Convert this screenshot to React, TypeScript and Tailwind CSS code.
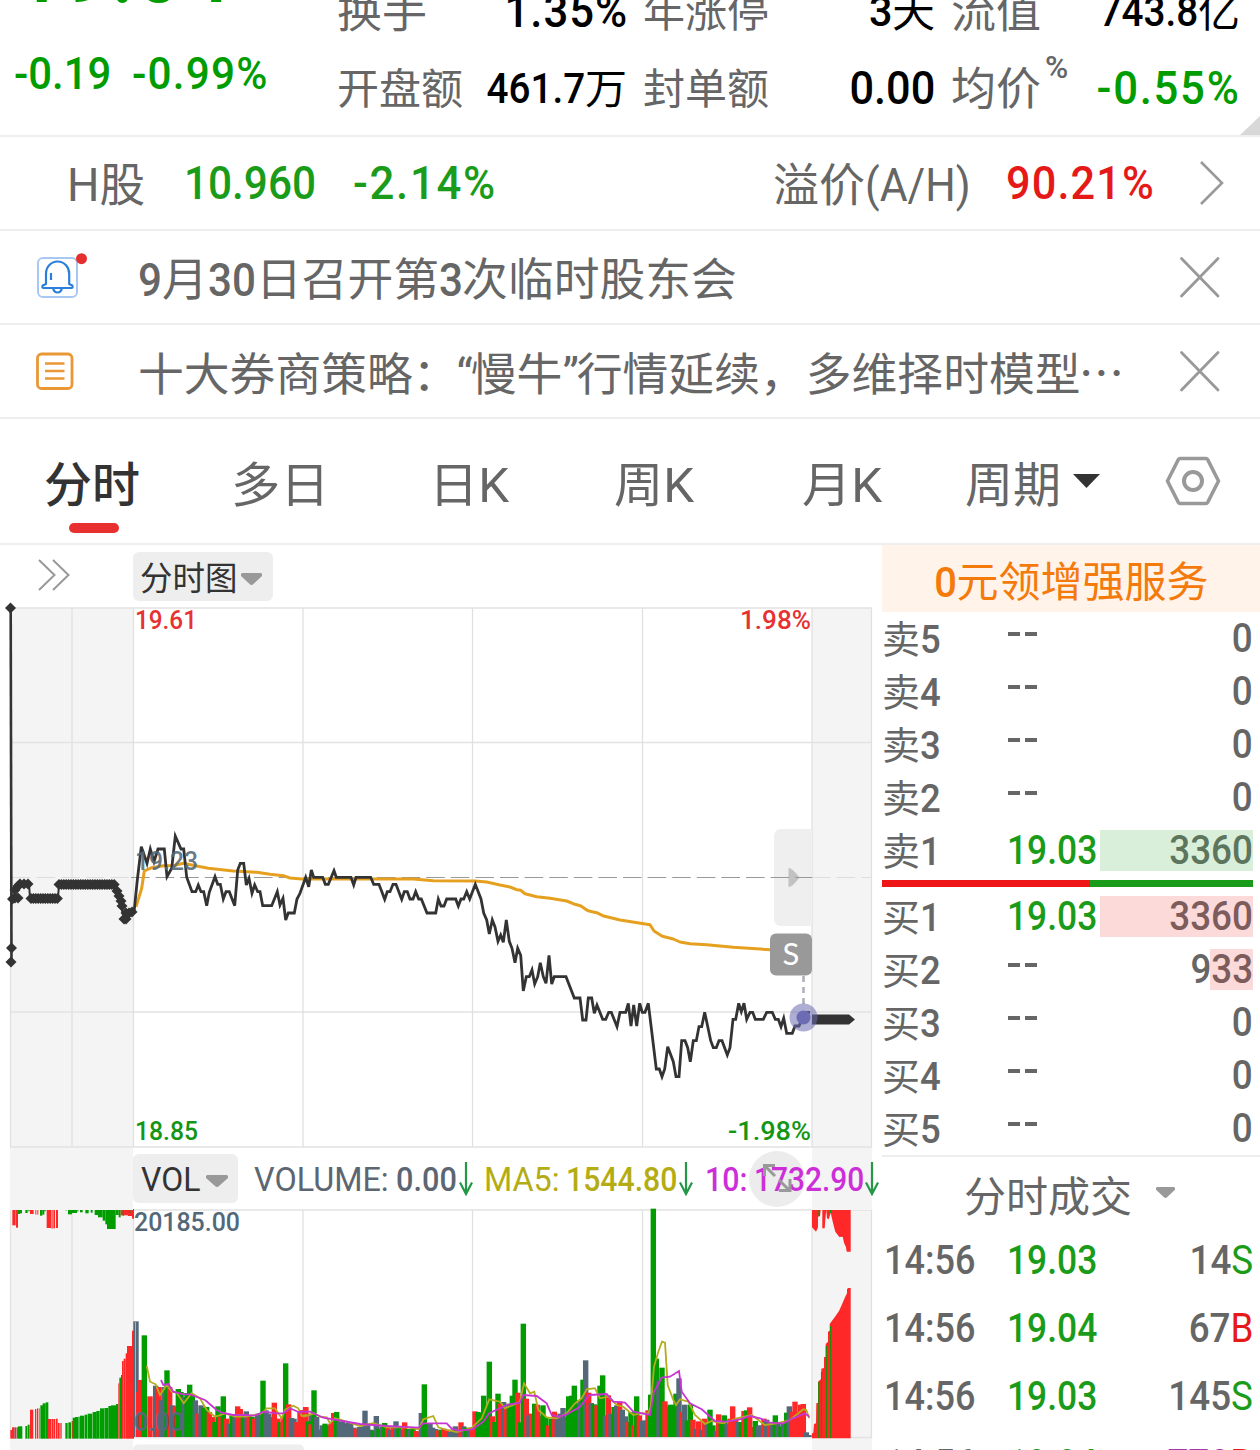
import type { ReactNode } from 'react';
import clsx from 'clsx';

const GREEN = '#009c00';
const RED = '#ff2828';
const SLATE = '#536878';

// condensed digits
const Num = ({ children, className }: { children: ReactNode; className?: string }) => (
  <span className={clsx('inline-block whitespace-nowrap', className ?? 'origin-left scale-x-[.92]')}>{children}</span>
);

const Caret = ({ className }: { className: string }) => (
  <svg viewBox="0 0 22 12" preserveAspectRatio="none" className={className} fill="currentColor">
    <path d="M1 0h20l1 1v2l-9 8q-2 2-4 0l-9-8v-2z" />
  </svg>
);

const CloseIcon = () => (
  <svg width="42" height="42" viewBox="0 0 42 42" className="shrink-0" stroke="#999" strokeWidth="2.8" strokeLinecap="round">
    <path d="M2.500 2.500l36.500 37.500M39 2.500l-36.500 37.500" />
  </svg>
);

const DownArrow = () => (
  <svg width="14" height="34" viewBox="0 0 14 34" className="shrink-0" fill="none" stroke="#249846" strokeWidth="2.2">
    <path d="M7 0v32M1 20.5l6 11.5 6-11.5" />
  </svg>
);

const stats = [
  {
    width: 'w-[306px] pr-[16px]',
    rows: [
      { label: '换手', size: 'text-[45px]', value: '1.35%', unit: '', num: 'text-[46px]', fit: 'origin-right scale-x-[.95] tracking-[1px] -mr-[1px]' },
      { label: '开盘额', size: 'text-[42px]', value: '461.7', unit: '万', num: 'text-[42px]', fit: 'origin-right scale-x-[.92]' },
    ],
  },
  {
    width: 'w-[308px] pr-[16px]',
    rows: [
      { label: '年涨停', size: 'text-[42px]', value: '3', unit: '天', num: 'text-[43px]', fit: 'origin-right scale-x-[.96]' },
      { label: '封单额', size: 'text-[42px]', value: '0.00', unit: '', num: 'text-[46px]', fit: 'origin-right scale-x-[.94]' },
    ],
  },
  {
    width: 'w-[309px] pr-[20px]',
    rows: [
      { label: '流值', size: 'text-[45px]', value: '743.8', unit: '亿', num: 'text-[42px]', fit: 'origin-right scale-x-[.92]' },
      {
        label: '均价',
        size: 'text-[45px]',
        value: '-0.55%',
        unit: '',
        num: 'text-[46px]',
        fit: 'origin-right scale-x-[.95] tracking-[1.8px] -mr-[1px]',
        sup: '%',
        green: true,
      },
    ],
  },
];

const Header = () => (
  <div className="relative flex h-[137px] overflow-hidden border-b-2 border-[#eee]">
    <div className="w-[337px] shrink-0 font-medium text-[#009c00]">
      <div className="-mt-[75px] h-[89px] pl-[15px] text-[95px] leading-[90px]">
        <Num className="origin-left scale-x-[.89]">19.04</Num>
      </div>
      <div className="flex h-[118px] items-center pl-[14px] text-[45px]">
        <Num className="w-[118px] origin-left scale-x-[.93]">-0.19</Num>
        <Num className="origin-left scale-x-[.94] tracking-[1.3px]">-0.99%</Num>
      </div>
    </div>
    {stats.map((col, i) => (
      <div key={i} className={clsx('-mt-[28px] shrink-0', col.width)}>
        {col.rows.map((row) => (
          <div key={row.label} className="flex h-[77px] items-center justify-between leading-[77px] whitespace-nowrap">
            <span className={clsx('relative pt-1 text-[#666]', row.size)}>
              {row.label}
              {row.sup && <span className="absolute -top-[18px] left-[94px] text-[31px] font-medium scale-x-[1.02] origin-left">{row.sup}</span>}
            </span>
            <span className={clsx('flex items-center pt-[1px] font-medium', row.num, row.green ? 'text-[#009c00]' : 'text-black')}>
              <Num className={row.fit}>{row.value}</Num>
              {row.unit && <span className="pt-[2px] font-normal">{row.unit}</span>}
            </span>
          </div>
        ))}
      </div>
    ))}
    <svg className="absolute right-0 bottom-0" width="20" height="19">
      <path d="M0 19L20 0v19z" fill="#d8d8d8" />
    </svg>
  </div>
);

const HShareRow = () => (
  <div className="flex h-[94px] items-center border-b-2 border-[#eee] text-[46px] text-[#666]">
    <div className="w-[184px] pt-[4px] pl-[67px]">
      <Num className="origin-left scale-x-[.99]">H股</Num>
    </div>
    <div className="w-[169px] font-medium text-[#1a9c1a]">
      <Num>10.960</Num>
    </div>
    <div className="w-[420px] font-medium text-[#1a9c1a]">
      <Num className="origin-left scale-x-[.95] tracking-[1.8px]">-2.14%</Num>
    </div>
    <div className="w-[233px] pt-[4px] whitespace-nowrap">
      溢价<Num className="origin-left scale-x-[.93]">(A/H)</Num>
    </div>
    <div className="w-[193px] font-medium text-[#e61919]">
      <Num className="origin-left scale-x-[.94] tracking-[1.2px]">90.21%</Num>
    </div>
    <svg width="26" height="46" viewBox="0 0 26 46" fill="none" stroke="#999" strokeWidth="2.6">
      <path d="M2 2l21 21L2 44" />
    </svg>
  </div>
);

const Notices = () => (
  <div className="text-[45.800px] text-[#666]">
    <div className="flex h-[94px] items-center border-b-2 border-[#eee] pr-[39px]">
      <svg width="138" height="50" viewBox="0 252 138 50" className="shrink-0" fill="none">
        <rect x="38" y="258" width="39" height="39" rx="5" stroke="#a8c8f4" strokeWidth="2" />
        <path
          d="M46 284V273.500A11.600 12 0 0 1 69.200 273.500V284L72.300 285.500Q73.300 288 71.300 288H43.700Q41.700 288 42.700 285.500Z"
          stroke="#2b7fdb"
          strokeWidth="2.2"
          strokeLinejoin="round"
        />
        <path d="M53 288q1 4.500 4.500 4.500t4.500-4.500M51 273v7" stroke="#2b7fdb" strokeWidth="2.2" />
        <circle cx="81.500" cy="258.700" r="5.500" fill="#e52e2e" />
      </svg>
      <span className="flex-1 pt-[8px] whitespace-nowrap">
        <Num className="origin-left scale-x-[.92] font-medium">9</Num>
        <span className="-ml-[2px]">月</span>
        <Num className="origin-left scale-x-[.92] font-medium">30</Num>
        <span className="-ml-[4px]">日召开第</span>
        <Num className="origin-left scale-x-[.92] font-medium">3</Num>
        <span className="-ml-[3px]">次临时股东会</span>
      </span>
      <CloseIcon />
    </div>
    <div className="flex h-[94px] items-center border-b-2 border-[#eee] pr-[39px]">
      <svg width="138" height="50" viewBox="0 346 138 50" className="shrink-0" fill="none" stroke="#ea9836">
        <rect x="37.500" y="354" width="34.500" height="34.500" rx="4" strokeWidth="2.8" />
        <path d="M45 363.500h19.500M45 371h19.500M45 378.500h19.500" strokeWidth="2.6" />
      </svg>
      <span className="flex-1 pt-[5px] whitespace-nowrap">
        十大券商策略：
        <span className="-ml-[2px] tracking-[-2px]">“</span>慢牛<span className="tracking-[-2px]">”</span>
        行情延续，多维择时模型
        <span className="-ml-[2px] font-['Noto_Sans_CJK_SC',sans-serif] leading-none">…</span>
      </span>
      <CloseIcon />
    </div>
  </div>
);

const tabs = [
  { name: '多日', width: 'w-[198px]' },
  { name: '日K', width: 'w-[185px]' },
  { name: '周K', width: 'w-[188px]' },
  { name: '月K', width: 'w-[163px]' },
];

const Tabs = () => (
  <div className="flex h-[126px] items-center border-b-2 border-[#eee] text-[48px] text-[#666]">
    <div className="relative w-[187px] pt-[9px] pl-[44px] font-medium text-[#333]">
      分时
      <span className="absolute -bottom-[23px] left-[69px] h-[10px] w-[50px] rounded-full bg-[#e83030]" />
    </div>
    <div className="flex pt-[9px] pl-[44px]">
      {tabs.map((tab) => (
        <div key={tab.name} className={tab.width}>
          <Num className="origin-left scale-x-[1.025]">{tab.name}</Num>
        </div>
      ))}
    </div>
    <div className="flex items-center pt-[9px]">
      周期
      <svg width="28" height="14" className="ml-[12px] -mt-[9px]">
        <path d="M0 0h27L13.500 14z" fill="#333" />
      </svg>
    </div>
    <svg width="58" height="52" viewBox="0 0 58 52" className="ml-[63px]" fill="none" stroke="#999">
      <path d="M16 3.500h26q1 0 1.700 1.200L54.500 26 43.700 47.300q-.7 1.200-1.700 1.200H16q-1 0-1.700-1.200L3.500 26 14.300 4.700Q15 3.500 16 3.500z" strokeWidth="3.5" />
      <circle cx="29" cy="26" r="9" strokeWidth="4" />
    </svg>
  </div>
);

// series are stored at three units per pixel, relative to an origin
const toPoints = (raw: string, ox: number, oy: number) =>
  raw
    .trim()
    .split(/\s+/)
    .map((p) => {
      const [x, y] = p.split(',').map(Number);
      return `${(ox + x / 3).toFixed(1)},${(oy + y / 3).toFixed(1)}`;
    })
    .join(' ');

const priceLine = [
  toPoints(
    '402,1103 412,1005 424,905 441,955 451,912 462,950 474,912 493,912 501,995 515,970 526,873 543,912 551,912 560,997 576,1040 587,1040 595,1020 603,1040 611,1040 620,1082 628,1042 645,995 653,1018 661,1018 670,1062 678,1040 688,1040 704,1082 713,975 721,955 731,955 739,1020 747,1000 756,1045 764,1020 773,1040 780,1040 788,1082 815,1082 832,1040 840,1080 849,1060 857,1125 865,1104 883,1104 891,1062',
    0,
    545,
  ),
  toPoints(
    '0,220 17,172 26,200 34,150 41,172 68,172 76,193 85,193 102,152 109,172 153,172 161,195 168,172 212,172 221,193 237,193 254,238 262,215 270,215 279,193 288,193 305,238 313,215 322,215 330,237 339,237 347,215 356,237 364,237 381,279 407,279 415,237 423,258 432,258 440,237 467,237 475,258 483,237 491,237 500,215 509,237 526,193 543,237 551,279 560,300 568,342 577,300 585,321 594,364 602,345 610,367 619,300 628,364 636,385 645,428 653,385 662,406 670,513 679,470 688,470 696,450 704,492 713,470 721,428 730,470 738,490 747,406 755,492 763,470 798,470 823,534 840,534 848,600 858,600 865,534',
    300,
    820,
  ),
  toPoints(
    '5,534 13,580 21,555 38,598 47,598 56,577 64,577 81,620 90,577 107,577 115,550 123,618 131,555 140,618 149,550 157,577 165,577 175,550 199,747 208,747 216,770 224,747 233,680 250,725 258,770 267,770 275,662 285,662 293,683 301,725 310,662 319,662 327,620 335,620 344,577 362,662 370,683 379,683 387,662 396,662 412,705 420,683 429,598 437,598 446,550 454,575 462,550 470,598 480,577 488,577 496,598 520,598 530,577 547,577 556,598 565,598 573,620 581,595 590,640 607,640 615,618 627,618 645,577 660,577',
    590,
    820,
  ),
].join(' ');

const averageLine = [
  toPoints('408,1085 425,1030 433,978 455,968 490,962 520,962 550,955 590,963 625,970 700,978 770,982 810,988 850,992 870,999 905,1002', 0, 545),
  toPoints('25,177 340,177 400,182 525,183 560,186 600,195 630,201 650,209 662,211 675,221 710,230 750,235 800,243 825,253 843,258 860,270', 300, 820),
  toPoints('0,274 20,278 38,287 90,300 180,314 192,333 217,349 250,357 270,366 300,371 350,374 430,382 540,389', 590, 820),
].join(' ');

const auction: [number, number][] = [
  [10.5, 608], [11.5, 948], [11, 962],
  [12.5, 899], [15, 898], [18, 898], [15, 890], [18, 886], [20, 884], [24, 884], [28, 884],
  ...Array.from({ length: 12 }, (_, i): [number, number] => [31 + i * 2.4, 898.5]),
  ...Array.from({ length: 24 }, (_, i): [number, number] => [59 + i * 2.4, 884.5]),
  [117, 891], [119, 896], [121, 901], [122, 906], [124, 919], [126, 919], [126, 913], [129, 913], [132, 912],
];

const columns = [10.5, 72, 133.5, 303, 472.5, 642.5, 812, 871.5];

const PriceChart = () => (
  <svg width="882" height="541" viewBox="0 607 882 541" className="block overflow-visible" fill="none">
    <path d="M10 608h123v540H10zM812 608h60v540h-60z" fill="#f4f4f4" />
    <path d="M10 608h862M10 742.500h862M10 1012h862M10 1147h862" stroke="#e2e2e2" strokeWidth="1.3" />
    {columns.map((x) => (
      <path key={x} d={`M${x} 608V1147`} stroke="#e0e0e0" strokeWidth="1.3" />
    ))}
    <path d="M781 829h31v97h-31q-7 0-7-8v-81q0-8 7-8z" fill="#efefef" />
    <path d="M788.500 868q4 0 11 9.500-7 9.500-11 9.500z" fill="#c2c2c2" />
    <path d="M131 877.500H812" stroke="#999" strokeWidth="1.2" strokeDasharray="18.6 6" />
    <path d="M12 877.500H131M812 877.500H871" stroke="#ddd" strokeWidth="1.2" strokeDasharray="18.6 6" />
    <polyline points={averageLine} stroke="#e6a020" strokeWidth="3" strokeLinejoin="round" />
    <polyline points={priceLine} stroke="#333" strokeWidth="2.8" />
    <text x="135" y="870" fontSize="26" fontWeight="500" fill={SLATE} fillOpacity="0.9" textLength="63" lengthAdjust="spacingAndGlyphs">
      19.23
    </text>
    <path d="M10.700 608L11.500 962" stroke="#333" strokeWidth="2.6" />
    <polyline points="13,898 20,884 29,884 30,898 58,898 59,884 116,884 124,919 133,912" stroke="#333" strokeWidth="2" />
    {auction.map(([x, y], i) => (
      <path key={i} d={`M${x} ${y - 5.5}l5.500 5.500-5.500 5.500-5.500-5.500z`} fill="#333" />
    ))}
    <path d="M812 1014.500h37l6 5-6 5h-37z" fill="#333" />
    <path d="M803.500 976v28" stroke="#b0b0bc" strokeWidth="2.6" strokeDasharray="6 5" />
    <circle cx="803.500" cy="1017.500" r="14" fill="#6c6cb0" fillOpacity="0.550" />
    <circle cx="803.500" cy="1017.500" r="7" fill="#6c6cb5" />
    <rect x="770" y="933.500" width="42" height="42" rx="6" fill="#999" />
    <text x="791" y="965" fontSize="31" fill="#fff" textAnchor="middle" fontFamily="Lato">S</text>
    <g fontSize="26" fontWeight="500">
      <text x="135" y="629" fill="#e63232" textLength="62" lengthAdjust="spacingAndGlyphs">19.61</text>
      <text x="740" y="629" fill="#e63232" textLength="71" lengthAdjust="spacingAndGlyphs">1.98%</text>
      <text x="135" y="1140" fill="#149614" textLength="63" lengthAdjust="spacingAndGlyphs">18.85</text>
      <text x="728" y="1140" fill="#149614" textLength="83" lengthAdjust="spacingAndGlyphs">-1.98%</text>
    </g>
  </svg>
);

const volumeBars = [
  {
    ox: 0,
    base: 950,
    raw: '408,603,s 416,815,r 421,779,r 433,645,g 450,828,r 467,796,s 476,800,r 484,840,s 492,800,s 501,750,g 509,800,r 518,855,s 526,858,r 535,806,g 543,815,g 552,830,s 561,818,g 569,793,g 577,822,g 586,840,s 594,880,r 603,855,s 611,862,g 620,860,g 628,875,r 637,890,r 645,905,g 654,858,g 662,890,r 670,828,g 679,895,r 688,910,s 696,885,g 705,890,s 713,858,r 721,866,r 730,885,g 739,873,s 747,885,r 756,890,g 764,895,r 773,880,s 781,885,s 789,781,g 798,870,s 806,880,s 815,890,s 823,847,r 832,895,r 840,905,g 849,890,r 857,729,g 866,852,r 874,893,s 882,895,s 891,905,r 900,875,r 908,870,r 917,860,r 925,903,g 934,880,s',
  },
  {
    ox: 300,
    base: 890,
    raw: '8,810,r 17,801,r 25,843,g 33,852,r 42,750,g 50,830,s 59,868,s 67,855,s 75,850,g 84,855,g 93,850,r 101,818,r 110,815,g 118,845,s 127,843,s 135,850,s 144,848,s 152,850,s 161,862,s 169,865,r 178,860,s 186,860,s 195,811,s 203,855,s 212,868,s 220,870,g 229,827,s 237,865,g 246,858,s 254,848,g 263,862,r 271,868,s 280,862,r 288,843,s 297,862,g 305,868,s 314,846,r 322,866,g 331,868,s 339,866,g 348,872,r 356,875,r 364,818,s 373,732,g 381,848,g 390,850,s 398,862,s 407,866,s 415,870,r 424,868,g 432,865,r 440,870,r 449,875,s 457,868,s 466,858,s 475,868,s 483,846,r 491,858,s 500,862,g 508,868,s 517,860,r 525,813,r 534,815,g 543,818,g 551,766,g 560,800,g 568,664,g 577,828,r 585,845,g 594,760,g 602,790,r 611,785,s 619,800,r 628,790,g 637,766,g 645,718,g 653,757,r 662,846,g 670,550,g 679,775,r 687,825,s 695,820,r 704,790,g 712,793,r 721,828,r 729,795,g 738,832,g 746,855,r 755,835,g 763,814,r 772,830,s 780,820,s 789,803,s 798,830,s 806,768,g 815,766,g 823,736,g 832,790,g 840,780,s 849,718,g 857,660,s 866,757,r',
  },
  {
    ox: 590,
    base: 890,
    raw: '4,788,s 13,792,g 21,795,r 30,736,g 38,705,g 46,825,s 55,765,r 63,820,s 72,800,g 80,795,s 89,783,r 97,808,s 106,828,s 114,845,r 123,815,g 131,855,r 140,768,g 148,825,r 157,842,s 165,840,s 174,810,r 182,763,g 190,205,g 199,655,g 207,720,s 216,682,g 225,783,r 233,800,r 241,793,g 250,795,g 258,760,g 267,714,s 275,815,r 284,793,s 292,840,g 301,793,g 309,838,r 317,865,s 326,843,r 335,868,s 343,835,r 352,850,s 360,808,g 369,855,g 377,872,s 386,822,r 394,850,g 403,825,g 411,850,s 420,835,r 428,798,r 437,835,r 445,845,s 454,845,g 462,812,r 470,810,g 479,801,r 488,860,r 496,842,g 505,856,s 513,855,s 522,835,r 530,838,s 539,850,r 547,850,s 556,825,g 564,850,s 573,858,g 581,850,s 590,817,g 598,798,s 607,815,r 615,784,r 624,815,r 632,793,r 640,791,r 649,876,s 657,884,s',
  },
].flatMap(({ ox, base, raw }) =>
  raw.split(' ').map((item) => {
    const [x, y, c] = item.split(',');
    return { x: ox + Number(x) / 3, h: (base - Number(y)) / 3, fill: c === 'g' ? GREEN : c === 'r' ? RED : SLATE };
  }),
);

const ma5 = [
  toPoints('440,737 450,785 467,793 480,825 500,795 515,815 530,818 551,850 575,820 600,835 620,870 645,890 662,885 675,880 705,890 735,890 765,885 785,880 800,865 825,865 845,895 855,870 880,857 895,865 905,888 920,885', 0, 1120),
  toPoints('10,830 25,826 42,820 60,830 80,832 90,850 105,835 140,845 180,858 220,850 260,862 320,862 356,868 370,838 400,828 415,862 440,870 470,876 500,868 517,862 545,835 568,778 600,785 615,805 640,795 660,785 672,730 690,760 703,755 715,810 740,832 770,835 800,820 825,790 845,775 860,748 880,745', 300, 1140),
  toPoints('15,745 30,775 55,770 80,795 100,800 130,825 150,820 175,820 182,800 192,680 205,635 216,605 225,608 233,735 250,780 258,795 270,778 295,785 315,825 345,852 365,843 400,850 440,835 485,825 505,840 525,855 560,850 600,840 640,808 649,810 658,835', 590, 1140),
].join(' ');

const ma10 = [
  toPoints('483,780 490,795 505,792 520,815 550,823 570,823 615,840 650,870 665,878 700,885 730,885 765,887 790,875 830,880 850,880 870,865 900,878', 0, 1120),
  toPoints('0,815 30,815 70,833 110,840 180,852 260,858 356,863 370,850 440,850 455,866 475,872 517,868 550,845 568,820 620,795 660,788 670,765 710,768 740,790 755,825 775,830 800,823 840,800 868,765', 300, 1140),
  toPoints('0,765 50,762 70,785 105,788 130,815 180,825 192,755 215,713 240,710 267,693 275,755 300,790 335,808 375,843 410,845 450,838 480,828 510,835 540,848 580,850 610,835 645,820 658,830', 590, 1140),
].join(' ');

// call-auction bars: [left, right, end, color], same units as the series above
type Block = [number, number, number, string];
const openBottom: Block[] = [
  [31, 36, 930, RED], [36, 44, 922, RED], [44, 49, 922, SLATE], [50, 54, 922, RED], [54, 67, 919, GREEN], [76, 82, 918, GREEN], [83, 89, 914, GREEN],
  [90, 100, 869, RED], [105, 109, 867, RED], [111, 115, 865, RED], [117, 119, 865, RED], [121, 129, 856, GREEN], [128, 137, 850, GREEN], [137, 145, 847, GREEN],
  [143, 154, 897, RED], [155, 159, 897, RED], [160, 166, 897, RED], [168, 173, 896, RED], [174, 179, 909, RED], [181, 185, 909, RED],
  [196, 203, 909, GREEN], [205, 213, 907, GREEN], [215, 219, 903, RED], [218, 225, 893, GREEN], [225, 234, 891, GREEN], [235, 239, 890, GREEN], [240, 253, 887, GREEN],
  [254, 262, 884, GREEN], [263, 277, 881, GREEN], [278, 290, 876, GREEN], [289, 299, 873, GREEN], [300, 312, 865, GREEN], [313, 325, 864, GREEN],
  [325, 333, 858, GREEN], [333, 348, 856, GREEN], [348, 355, 852, GREEN], [355, 358, 790, RED], [358, 363, 773, GREEN], [363, 366, 765, GREEN],
  [366, 371, 723, RED], [371, 377, 716, RED], [377, 382, 700, RED], [381, 396, 678, RED], [396, 402, 632, RED],
];
const openTop: Block[] = [
  [32, 38, 270, GREEN], [37, 47, 316, RED], [48, 54, 323, RED], [54, 60, 282, GREEN], [60, 66, 280, GREEN], [76, 83, 279, GREEN], [85, 89, 274, GREEN],
  [90, 101, 282, RED], [106, 109, 284, RED], [112, 115, 284, RED], [120, 127, 287, GREEN], [127, 133, 284, GREEN], [133, 137, 274, GREEN], [140, 154, 324, RED],
  [155, 158, 326, RED], [160, 165, 325, RED], [168, 174, 324, RED], [181, 183, 270, RED], [197, 200, 272, GREEN], [204, 216, 283, GREEN], [216, 231, 279, GREEN],
  [232, 235, 275, GREEN], [240, 248, 277, GREEN], [256, 266, 280, GREEN], [272, 278, 278, GREEN], [284, 294, 285, GREEN], [294, 308, 292, GREEN],
  [308, 316, 302, GREEN], [316, 321, 313, GREEN], [321, 347, 327, GREEN], [347, 356, 285, GREEN], [356, 362, 292, GREEN], [362, 384, 286, RED],
  [368, 371, 288, GREEN], [384, 396, 288, RED], [388, 391, 280, GREEN], [396, 402, 296, RED],
];

const closeBottom = toPoints(
  '666,895 666,880 670,878 672,852 678,850 679,790 684,788 684,725 690,720 694,716 694,686 702,684 702,652 707,650 707,612 714,605 714,575 719,572 719,552 724,545 735,530 747,513 755,495 765,472 771,460 771,447 775,444 782,444 782,895',
  590,
  1140,
);
const closeTop = toPoints(
  '666,207 666,262 678,275 684,262 684,230 690,228 692,209 697,209 697,265 704,265 706,240 709,209 711,235 716,238 722,218 728,245 736,275 748,291 758,290 762,308 768,322 770,335 782,335 782,207',
  590,
  1140,
);

const VolumeChart = () => (
  <svg width="882" height="240" viewBox="0 1210 882 240" className="block overflow-visible" fill="none">
    <path d="M10 1210h123v240H10zM812 1210h60v240h-60z" fill="#f4f4f4" />
    <path d="M133 1210h739M133 1437.500h739" stroke="#e2e2e2" strokeWidth="1.3" />
    {columns.map((x) => (
      <path key={x} d={`M${x} 1210V1437`} stroke="#e0e0e0" strokeWidth="1.3" />
    ))}
    {openBottom.map(([l, r, y, fill], i) => (
      <rect key={i} x={l / 3} y={1120 + y / 3} width={(r - l) / 3} height={(956 - y) / 3} fill={fill} />
    ))}
    {openTop.map(([l, r, y, fill], i) => (
      <rect key={i} x={l / 3} y={1209} width={(r - l) / 3} height={(y - 267) / 3} fill={fill} />
    ))}
    {volumeBars.map((bar, i) => (
      <rect key={i} x={bar.x - 2.7} y={1437 - bar.h} width={5.4} height={bar.h} fill={bar.fill} />
    ))}
    <path d="M135.500 1322v115" stroke="#a8b4bd" strokeWidth="1" />
    <polygon points={closeBottom} fill={RED} />
    <path d="M818.800 1382v56M821.500 1372v66M826.300 1346v92M830.700 1326v112" stroke={GREEN} strokeWidth="1.1" />
    <polygon points={closeTop} fill={RED} />
    <path d="M818.500 1209h1.500v7h-1.500zM830 1209h1v4h-1z" fill={GREEN} />
    <polyline points={ma5} stroke="#b4ac1c" strokeWidth="1.8" />
    <polyline points={ma10} stroke="#c834d2" strokeWidth="1.8" />
    <g fontSize="26" fontWeight="500" fill={SLATE}>
      <text x="134" y="1231" textLength="106" lengthAdjust="spacingAndGlyphs">20185.00</text>
      <text x="134" y="1431" textLength="50" lengthAdjust="spacingAndGlyphs">0.00</text>
    </g>
    <rect x="133" y="1444.500" width="171" height="20" rx="5" fill="#eee" />
  </svg>
);

const IndicatorBar = () => (
  <div className="relative flex h-[62px] w-[882px] items-center">
    <div className="absolute inset-y-0 left-[10px] w-[123px] bg-[#f4f4f4]" />
    <div className="absolute inset-y-0 left-[812px] w-[60px] bg-[#f4f4f4]" />
    <div className="absolute top-[3px] left-[749px] size-[56px] rounded-full bg-[#ececec]" />
    <div className="relative flex items-center pl-[133px] text-[33px] whitespace-nowrap">
      <div className="-mt-[2px] flex h-[49px] w-[105px] items-center rounded-md bg-[#eee] pt-[2px] pl-[8px] text-[#333]">
        <Num className="w-[65px] origin-left scale-x-[.97]">VOL</Num>
        <Caret className="mt-[4px] h-[12px] w-[22px] text-[#999]" />
      </div>
      <div className="flex items-center pl-[16px] text-[#5c6672]">
        <Num className="w-[142px] origin-left scale-x-[.98]">VOLUME:</Num>
        <Num className="w-[63px] origin-left scale-x-[.93] font-medium">0.00</Num>
        <DownArrow />
      </div>
      <div className="flex items-center pl-[11px] text-[#b4ac14]">
        <Num className="w-[82px] origin-left scale-x-[.98]">MA5:</Num>
        <Num className="w-[113px] origin-left scale-x-[.915] font-medium">1544.80</Num>
        <DownArrow />
      </div>
      <div className="flex items-center pl-[12px] text-[#cc2fd8]">
        <Num className="w-[49px] origin-left scale-x-[.92] font-medium">10:</Num>
        <Num className="w-[111px] origin-left scale-x-[.905] font-medium">1732.90</Num>
        <DownArrow />
      </div>
    </div>
    <svg className="absolute top-[15px] left-[762px]" width="30" height="30" viewBox="0 0 30 30" fill="none" stroke="#999" strokeWidth="3">
      <path d="M2.500 13V2.500H13M3 3l10 10M17 17l10 10M28 16v11.500H17" />
    </svg>
  </div>
);

const ChartColumn = () => (
  <div className="w-[882px] shrink-0">
    <div className="flex h-[62px] items-start pt-[7px]">
      <svg width="133" height="46" viewBox="0 0 133 46" fill="none" stroke="#999" strokeWidth="2">
        <path d="M39 8l15.500 15L39 38M53 8l15.500 15L53 38" />
      </svg>
      <div className="flex h-[49px] w-[140px] items-center rounded-md bg-[#eee] pl-[7px] text-[32.500px] text-[#333]">
        <span className="pt-[5px]">分时图</span>
        <Caret className="mt-[5px] ml-[3px] h-[12px] w-[21px] text-[#999]" />
      </div>
    </div>
    <PriceChart />
    <IndicatorBar />
    <VolumeChart />
  </div>
);

type Level = { side: string; price?: string; volume: string; bar?: string };

const asks: Level[] = [
  { side: '卖5', volume: '0' },
  { side: '卖4', volume: '0' },
  { side: '卖3', volume: '0' },
  { side: '卖2', volume: '0' },
  { side: '卖1', price: '19.03', volume: '3360', bar: 'w-[153px] bg-[#daefda]' },
];

const bids: Level[] = [
  { side: '买1', price: '19.03', volume: '3360', bar: 'w-[153px] bg-[#fcdada]' },
  { side: '买2', volume: '933', bar: 'w-[43px] bg-[#fcdada]' },
  { side: '买3', volume: '0' },
  { side: '买4', volume: '0' },
  { side: '买5', volume: '0' },
];

const BookRow = ({ level }: { level: Level }) => (
  <div className="relative flex h-[53px] items-center pr-[7px] text-[40px] leading-[53px] font-medium text-[#666]">
    {level.bar && <div className={clsx('absolute top-[6px] right-[7px] h-[41px]', level.bar)} />}
    <div className="w-[125px] pt-[3px] text-[38px]">
      <span className="font-normal">{level.side[0]}</span>
      <Num className="origin-left scale-x-[.96]">{level.side[1]}</Num>
    </div>
    {level.price ? (
      <Num className="origin-left scale-x-[.885] text-[#1a9c1a]">{level.price}</Num>
    ) : (
      <span className="flex gap-[5px] pb-[10px] pl-[1px]">
        <i className="h-[4px] w-[12px] bg-[#666]" />
        <i className="h-[4px] w-[12px] bg-[#666]" />
      </span>
    )}
    <Num className={clsx('ml-auto origin-right scale-x-[.92]', level.price && (level.side[0] === '卖' ? 'text-[#5c755c]' : 'text-[#7d5c5c]'))}>
      {level.volume === '933' ? (
        <>
          9<span className="text-[#7d5c5c]">33</span>
        </>
      ) : (
        level.volume
      )}
    </Num>
  </div>
);

const trades = [
  { time: '14:56', price: '19.03', volume: '14', side: 'S' },
  { time: '14:56', price: '19.04', volume: '67', side: 'B' },
  { time: '14:56', price: '19.03', volume: '145', side: 'S' },
  { time: '14:56', price: '19.04', volume: '778', side: 'B', large: true },
];

const OrderBook = () => (
  <div className="h-[905px] flex-1 overflow-hidden">
    <div className="flex h-[67px] items-center justify-center bg-[#fff3ea] pt-[8px] pr-[1px] text-[42px] text-[#f47a0c]">
      <Num className="origin-right scale-x-[.95] font-medium">0</Num>
      元领增强服务
    </div>
    {asks.map((level) => (
      <BookRow key={level.side} level={level} />
    ))}
    <div className="mt-[3px] mr-[7px] mb-[3px] flex h-[7px]">
      <div className="w-[208px] bg-[#ee1616]" />
      <div className="flex-1 bg-[#1a9c1a]" />
    </div>
    {bids.map((level) => (
      <BookRow key={level.side} level={level} />
    ))}
    <div className="flex h-[72px] items-center border-t-2 border-[#eee] pt-[9px] pl-[82px] text-[42px] text-[#666]">
      <span className="pt-[2px]">分时成交</span>
      <Caret className="-mt-[8px] ml-[24px] h-[11px] w-[19px] text-[#999]" />
    </div>
    {trades.map((trade, i) => (
      <div key={i} className="flex h-[68px] items-center pr-[7px] pl-[2px] text-[40px] leading-[68px] font-medium text-[#666]">
        <Num className="w-[123px] origin-left scale-x-[.9]">{trade.time}</Num>
        <Num className="origin-left scale-x-[.885] text-[#1a9c1a]">{trade.price}</Num>
        <Num className={clsx('ml-auto origin-right scale-x-[.92]', trade.large && 'text-[#a838b0]')}>
          {trade.volume}
          <span className={clsx('font-normal', trade.side === 'S' ? 'text-[#1a9c1a]' : 'text-[#e61919]')}>{trade.side}</span>
        </Num>
      </div>
    ))}
  </div>
);

const App = () => (
  <div className="h-[1450px] w-[1260px] overflow-hidden bg-white font-[Roboto,'Noto_Sans_CJK_SC',sans-serif] leading-none">
    <Header />
    <HShareRow />
    <Notices />
    <Tabs />
    <div className="flex">
      <ChartColumn />
      <OrderBook />
    </div>
  </div>
);

export default App;
